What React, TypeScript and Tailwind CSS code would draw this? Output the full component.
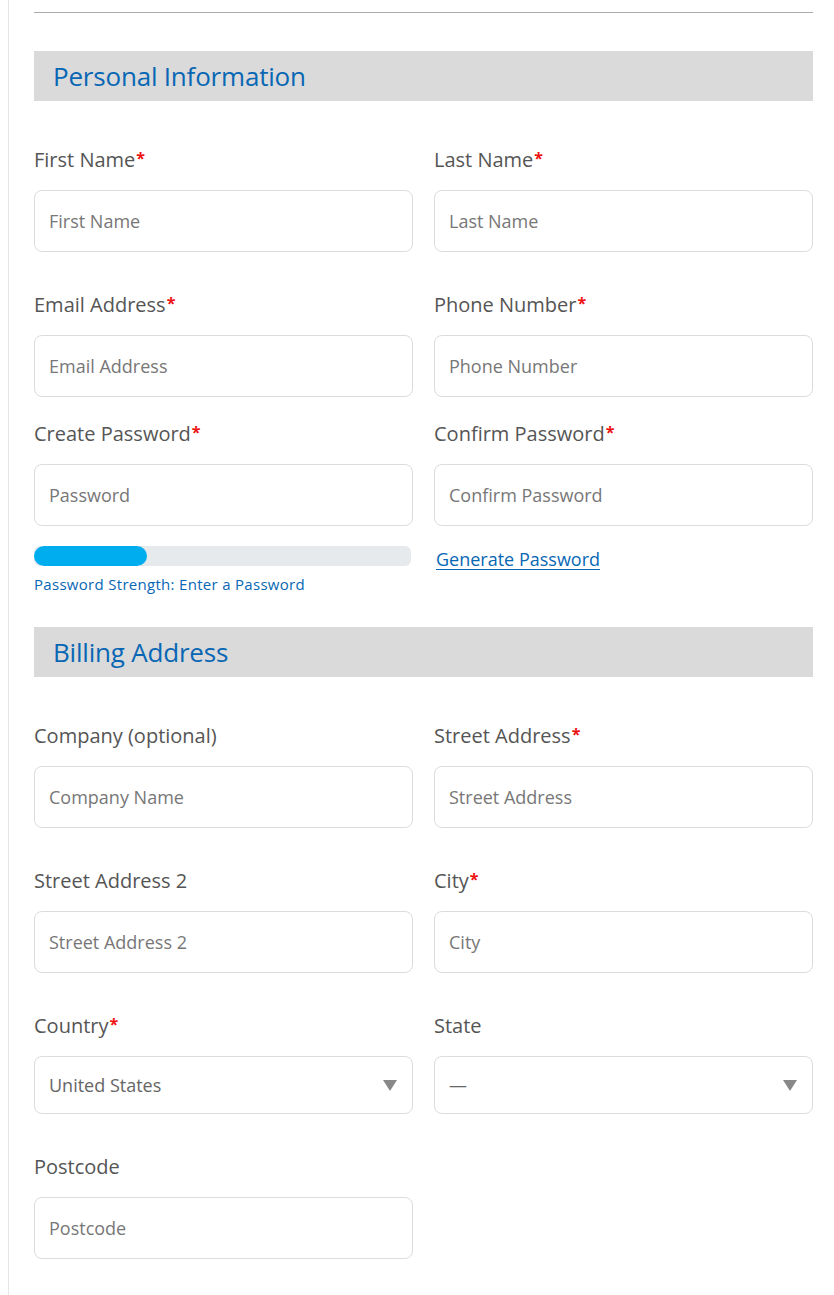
import React from 'react';

const FONT = { fontFamily: '"Open Sans", "Liberation Sans", sans-serif' };

function Label({ text, required }: { text: string; required?: boolean }) {
  return (
    <label className="block h-[28px] text-[20px] leading-[28px] font-medium text-[#555555]">
      {text}
      {required && <span className="text-[#ee1111] text-[16px] font-bold align-top relative top-[-2px] ml-[1px]">*</span>}
    </label>
  );
}

function Field({ label, placeholder, required }: { label: string; placeholder: string; required?: boolean }) {
  return (
    <div>
      <Label text={label} required={required} />
      <input
        placeholder={placeholder}
        className="mt-[16px] block w-full h-[62px] border border-[#dcdcdc] rounded-[8px] px-[14px] text-[18px] text-[#555] placeholder:text-[#777] bg-white outline-none"
      />
    </div>
  );
}

function SelectField({ label, value, required }: { label: string; value: string; required?: boolean }) {
  return (
    <div>
      <Label text={label} required={required} />
      <div className="mt-[16px] flex items-center justify-between h-[58px] border border-[#dcdcdc] rounded-[8px] pl-[14px] pr-[15px] bg-white">
        <span className="text-[18px] text-[#666]">{value}</span>
        <svg width="14" height="11" viewBox="0 0 14 11"><path d="M0 0h14L7 11z" fill="#888" /></svg>
      </div>
    </div>
  );
}

function SectionHeader({ title }: { title: string }) {
  return (
    <div className="h-[50px] bg-[#dadada] flex items-center pl-[19px]">
      <h2 className="text-[26px] font-medium text-[#0867b4] tracking-[-0.2px]">{title}</h2>
    </div>
  );
}

export default function App() {
  return (
    <div className="min-h-[1295px] bg-white" style={FONT}>
      <div className="ml-[8px] min-h-[1295px] border-l border-[#e6e6e6] pl-[25px] pr-[21px] pt-[12px] pb-[36px]">
        <div className="border-t border-[#ababab]" />

        <div className="mt-[38px]">
          <SectionHeader title="Personal Information" />
        </div>

        <div className="mt-[45px] grid grid-cols-2 gap-x-[21px]">
          <Field label="First Name" placeholder="First Name" required />
          <Field label="Last Name" placeholder="Last Name" required />
        </div>

        <div className="mt-[39px] grid grid-cols-2 gap-x-[21px]">
          <Field label="Email Address" placeholder="Email Address" required />
          <Field label="Phone Number" placeholder="Phone Number" required />
        </div>

        <div className="mt-[23px] grid grid-cols-2 gap-x-[21px]">
          <Field label="Create Password" placeholder="Password" required />
          <Field label="Confirm Password" placeholder="Confirm Password" required />
        </div>

        <div className="mt-[20px] grid grid-cols-2 gap-x-[21px]">
          <div>
            <div className="h-[20px] w-[377px] rounded-[6px] bg-[#e6eaed] overflow-hidden">
              <div className="h-full w-[113px] rounded-[10px] bg-[#00adee]" />
            </div>
            <p className="mt-[8px] h-[20px] text-[15px] leading-[20px] font-medium tracking-[0.3px] text-[#0867b4]">Password Strength: Enter a Password</p>
          </div>
          <div className="pl-[2px] pt-[1px]">
            <a href="#" className="text-[18px] leading-[24px] font-medium text-[#0867b4] underline underline-offset-[3px]">Generate Password</a>
          </div>
        </div>

        <div className="mt-[33px]">
          <SectionHeader title="Billing Address" />
        </div>

        <div className="mt-[45px] grid grid-cols-2 gap-x-[21px]">
          <Field label="Company (optional)" placeholder="Company Name" />
          <Field label="Street Address" placeholder="Street Address" required />
        </div>

        <div className="mt-[39px] grid grid-cols-2 gap-x-[21px]">
          <Field label="Street Address 2" placeholder="Street Address 2" />
          <Field label="City" placeholder="City" required />
        </div>

        <div className="mt-[39px] grid grid-cols-2 gap-x-[21px]">
          <SelectField label="Country" value="United States" required />
          <SelectField label="State" value="—" />
        </div>

        <div className="mt-[39px] grid grid-cols-2 gap-x-[21px]">
          <Field label="Postcode" placeholder="Postcode" />
        </div>
      </div>
    </div>
  );
}
